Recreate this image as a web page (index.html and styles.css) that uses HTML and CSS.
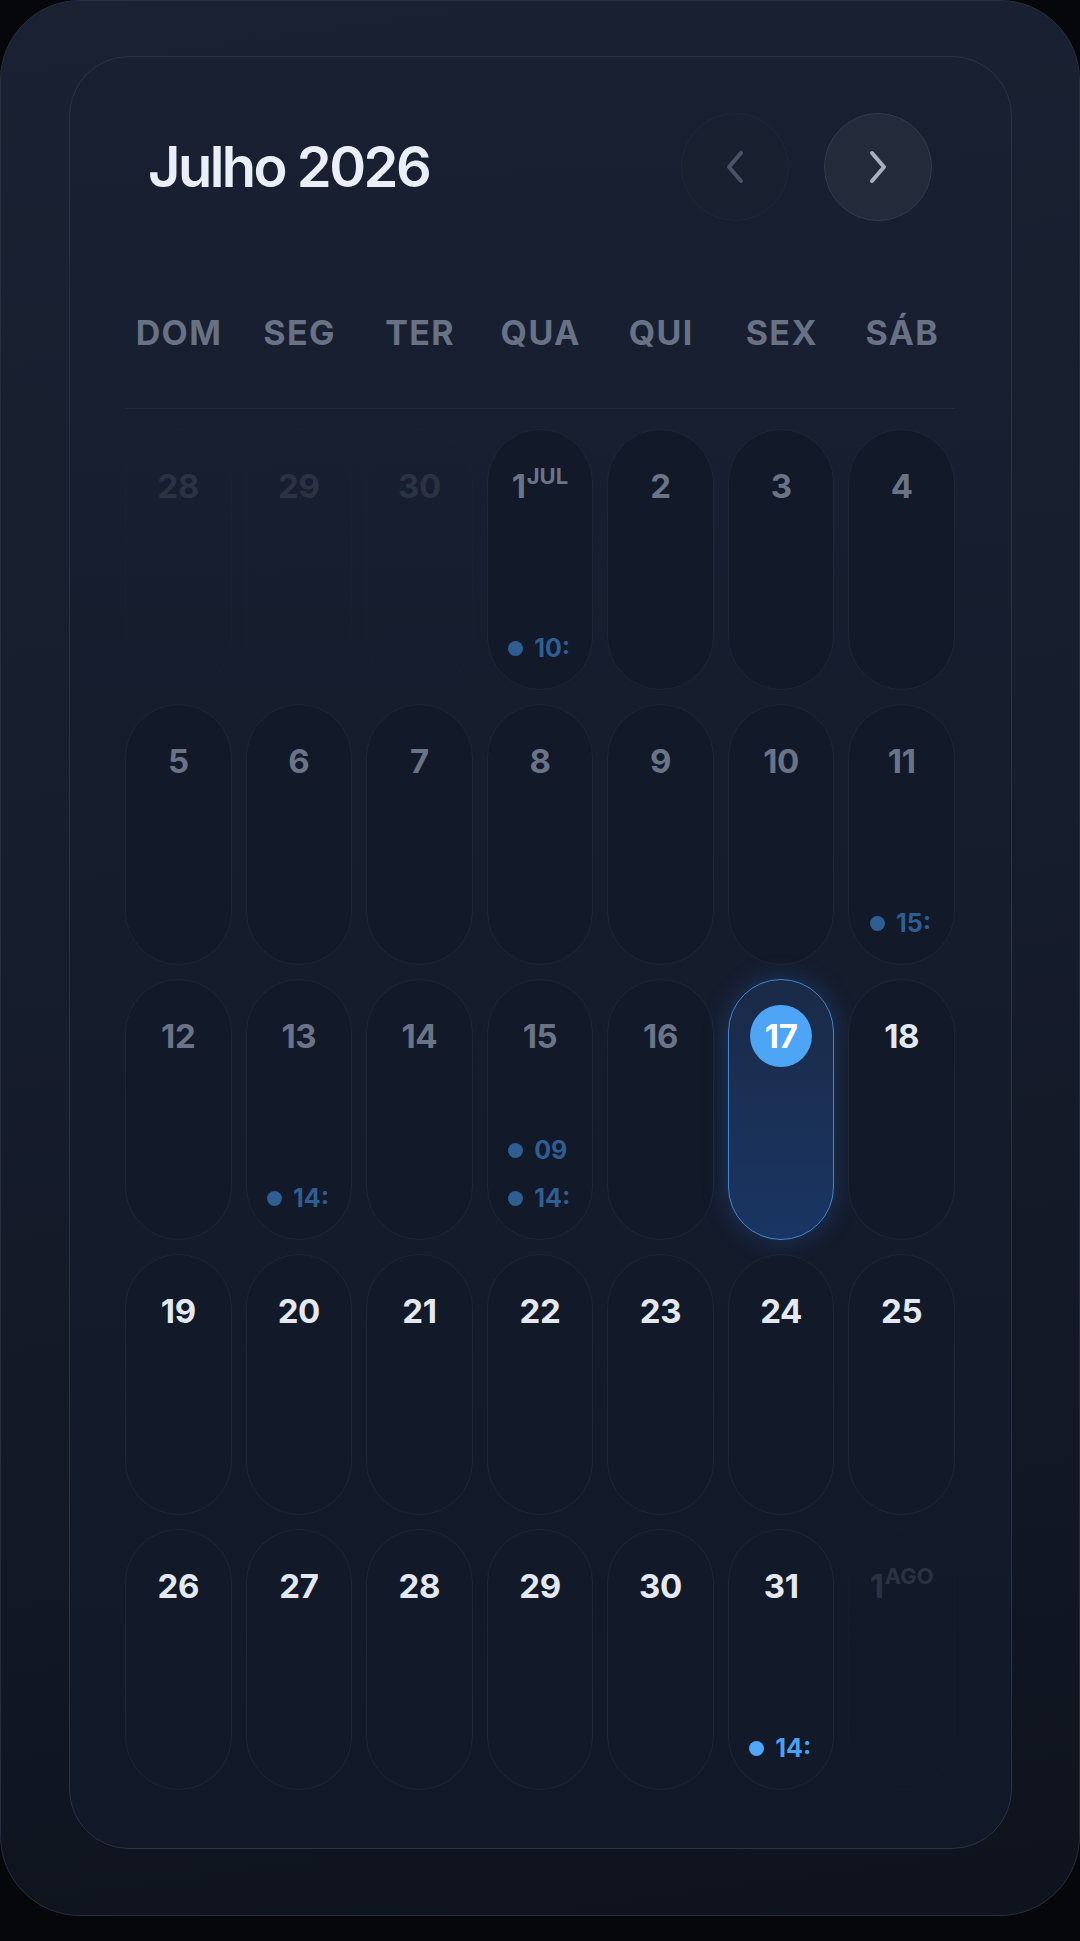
FILE: index.html
```html
<!DOCTYPE html>
<html lang="pt-BR">
<head>
<meta charset="utf-8">
<title>Julho 2026</title>
<link rel="stylesheet" href="styles.css">
</head>
<body>
<div class="shell">
  <div class="card">
    <header class="head">
      <h1 class="title">Julho 2026</h1>
      <div class="nav">
        <button class="nav-btn prev" aria-label="Mês anterior">
          <svg width="24" height="36" viewBox="0 0 24 36"><path d="M18 4 L6 18 L18 32" fill="none" stroke="currentColor" stroke-width="4" stroke-linecap="round" stroke-linejoin="round"/></svg>
        </button>
        <button class="nav-btn next" aria-label="Próximo mês">
          <svg width="24" height="36" viewBox="0 0 24 36"><path d="M6 4 L18 18 L6 32" fill="none" stroke="currentColor" stroke-width="4" stroke-linecap="round" stroke-linejoin="round"/></svg>
        </button>
      </div>
    </header>

    <div class="weekdays">
      <span>DOM</span><span>SEG</span><span>TER</span><span>QUA</span><span>QUI</span><span>SEX</span><span>SÁB</span>
    </div>

    <div class="grid">
      <div class="day muted"><span class="num">28</span></div>
      <div class="day muted"><span class="num">29</span></div>
      <div class="day muted"><span class="num">30</span></div>
      <div class="day past"><span class="num">1<sup class="mon">JUL</sup></span>
        <div class="events"><div class="ev"><i class="dot"></i><span>10:</span></div></div>
      </div>
      <div class="day past"><span class="num">2</span></div>
      <div class="day past"><span class="num">3</span></div>
      <div class="day past"><span class="num">4</span></div>

      <div class="day past"><span class="num">5</span></div>
      <div class="day past"><span class="num">6</span></div>
      <div class="day past"><span class="num">7</span></div>
      <div class="day past"><span class="num">8</span></div>
      <div class="day past"><span class="num">9</span></div>
      <div class="day past"><span class="num">10</span></div>
      <div class="day past"><span class="num">11</span>
        <div class="events"><div class="ev"><i class="dot"></i><span>15:</span></div></div>
      </div>

      <div class="day past"><span class="num">12</span></div>
      <div class="day past"><span class="num">13</span>
        <div class="events"><div class="ev"><i class="dot"></i><span>14:</span></div></div>
      </div>
      <div class="day past"><span class="num">14</span></div>
      <div class="day past"><span class="num">15</span>
        <div class="events">
          <div class="ev"><i class="dot"></i><span>09</span></div>
          <div class="ev"><i class="dot"></i><span>14:</span></div>
        </div>
      </div>
      <div class="day past"><span class="num">16</span></div>
      <div class="day today"><span class="num">17</span></div>
      <div class="day future"><span class="num">18</span></div>

      <div class="day future"><span class="num">19</span></div>
      <div class="day future"><span class="num">20</span></div>
      <div class="day future"><span class="num">21</span></div>
      <div class="day future"><span class="num">22</span></div>
      <div class="day future"><span class="num">23</span></div>
      <div class="day future"><span class="num">24</span></div>
      <div class="day future"><span class="num">25</span></div>

      <div class="day future"><span class="num">26</span></div>
      <div class="day future"><span class="num">27</span></div>
      <div class="day future"><span class="num">28</span></div>
      <div class="day future"><span class="num">29</span></div>
      <div class="day future"><span class="num">30</span></div>
      <div class="day future"><span class="num">31</span>
        <div class="events"><div class="ev"><i class="dot"></i><span>14:</span></div></div>
      </div>
      <div class="day muted"><span class="num">1<sup class="mon">AGO</sup></span></div>
    </div>
  </div>
</div>
</body>
</html>
```

FILE: styles.css
```css
* { box-sizing: border-box; }

html, body {
  margin: 0;
  background: #05070a;
}

body {
  font-family: Inter, "Noto Sans", "Liberation Sans", sans-serif;
  width: 1080px;
  height: 1941px;
  overflow: hidden;
}

.shell {
  width: 1080px;
  height: 1916px;
  border-radius: 80px;
  border: 1.5px solid #272e3e;
  background: linear-gradient(172deg, #1a2132 0%, #161d2d 45%, #111723 80%, #0e131d 100%);
  padding: 54.5px 67.5px 0;
}

.card {
  height: 1793px;
  border: 1.5px solid #2a3244;
  border-radius: 60px;
  background: linear-gradient(178deg, #182032 0%, #151c2c 50%, #111827 100%);
  padding: 56.5px 55.5px 0;
}

.head {
  height: 108px;
  padding: 0 23px;
  display: flex;
  align-items: center;
  justify-content: space-between;
}

.title {
  margin: 0;
  font-size: 56px;
  font-weight: 600;
  letter-spacing: -0.045em;
  color: #e9eef7;
  line-height: 1;
}

.nav {
  display: flex;
  gap: 35px;
}

.nav-btn {
  width: 108px;
  height: 108px;
  border-radius: 50%;
  padding: 0;
  display: grid;
  place-items: center;
  cursor: pointer;
}

.nav-btn svg { display: block; }

.prev {
  background: #19202f;
  border: 1.5px solid #20283a;
  color: #4a5366;
}

.next {
  background: #232a3a;
  border: 1.5px solid #333b4c;
  color: #a9b1bf;
}

.weekdays {
  margin-top: 95px;
  display: grid;
  grid-template-columns: repeat(7, 1fr);
  gap: 14px;
  padding-bottom: 58px;
  border-bottom: 1px solid #222a3a;
}

.weekdays span {
  text-align: center;
  font-size: 34px;
  font-weight: 700;
  line-height: 34px;
  height: 34px;
  letter-spacing: 0.04em;
  padding-left: 0.04em;
  color: #687285;
}

.grid {
  margin-top: 20px;
  display: grid;
  grid-template-columns: repeat(7, 1fr);
  grid-auto-rows: 261px;
  gap: 14px;
}

.day {
  border-radius: 54px;
  border: 1.5px solid #1f2636;
  background: #121928;
  display: flex;
  flex-direction: column;
  padding-top: 24.5px;
}

.num {
  align-self: center;
  min-width: 62px;
  height: 62px;
  border-radius: 31px;
  text-align: center;
  line-height: 62px;
  font-size: 33px;
  font-weight: 700;
  letter-spacing: -0.01em;
  white-space: nowrap;
}

.mon {
  font-size: 22px;
  line-height: 0;
  vertical-align: 14px;
  margin-left: 1px;
  letter-spacing: 0;
}

.muted {
  background: rgba(255, 255, 255, 0.004);
  border-color: rgba(255, 255, 255, 0.012);
}
.muted .num { color: #2b3343; }

.past .num { color: #6b7486; }
.future .num { color: #e4e9f1; }

.today {
  border-color: #4287d2;
  background: linear-gradient(180deg, #1a2a47 0%, #1a3158 60%, #1a3564 100%);
  box-shadow: 0 0 26px rgba(56, 130, 240, 0.28);
}
.today .num {
  background: #4ea5f6;
  color: #ffffff;
}

.events {
  margin-top: auto;
  padding: 0 0 29px 20.5px;
  display: flex;
  flex-direction: column;
  gap: 24px;
}

.ev {
  display: flex;
  align-items: center;
  gap: 11px;
  height: 24px;
  font-size: 25px;
  font-weight: 700;
  line-height: 24px;
  white-space: nowrap;
}

.dot {
  flex: none;
  width: 15px;
  height: 15px;
  border-radius: 50%;
}

.past .ev { color: #2f5e93; }
.past .dot { background: #2f5e93; }
.future .ev { color: #4aa2f3; }
.future .dot { background: #4ea7f8; }
```
